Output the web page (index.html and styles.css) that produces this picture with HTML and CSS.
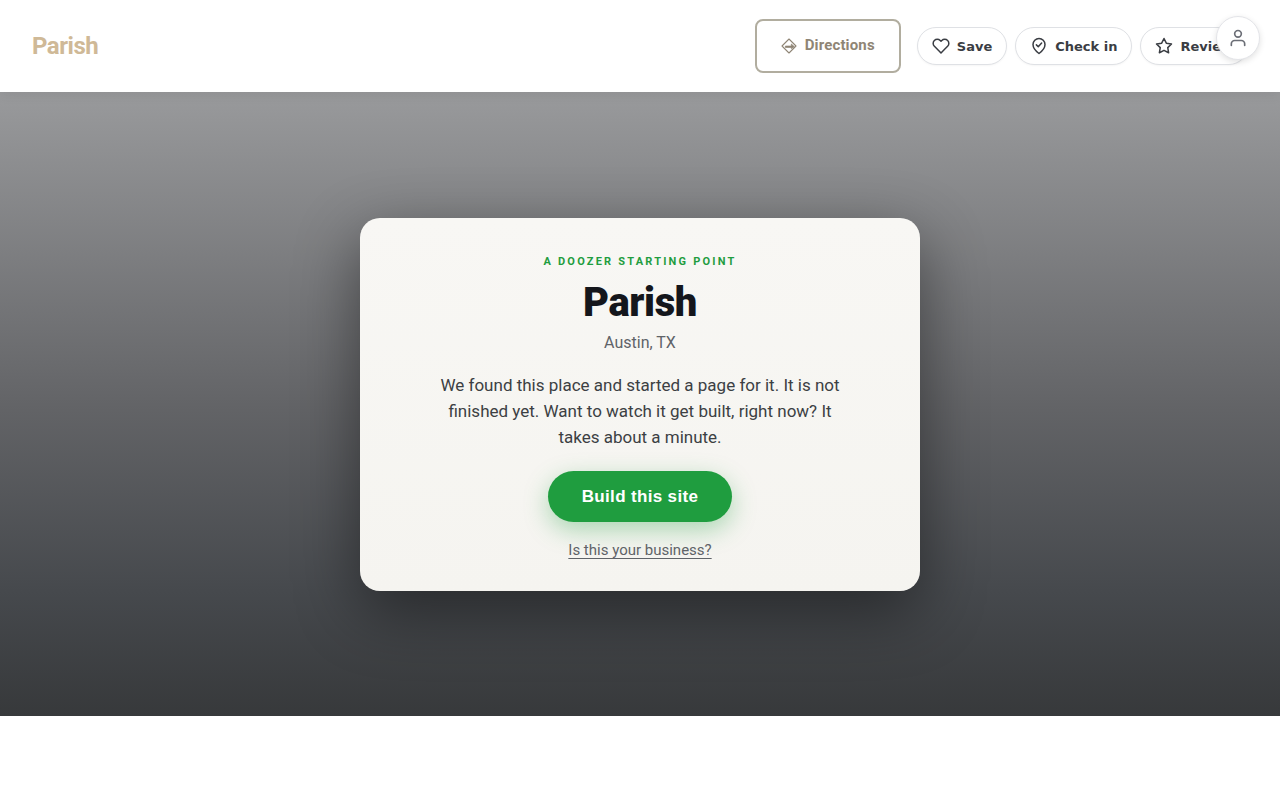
FILE: index.html
```html
<!DOCTYPE html>
<html lang="en">
<head>
    <meta charset="UTF-8">
    <meta name="viewport" content="width=device-width, initial-scale=1.0">
    <title>Parish</title>
    <link rel="stylesheet" href="styles.css">
</head>
<body>
    <header class="site-header">
        <a class="brand" href="#">Parish</a>

        <nav class="header-actions">
            <a class="directions" href="#">
                <svg class="directions-icon" viewBox="0 0 24 24" fill="none" stroke="currentColor" stroke-width="1.6" stroke-linejoin="round">
                    <path d="M12 1.500 22.500 12 12 22.500 1.500 12z"/>
                    <path d="M6.500 12h9v-3l4.500 4-4.500 3v-1.800h-9z" fill="currentColor" stroke-width="1"/>
                </svg>
                <span>Directions</span>
            </a>

            <div class="pills">
                <button class="pill" type="button">
                    <svg viewBox="0 0 24 24">
                        <path d="M20.840 4.610a5.500 5.500 0 0 0-7.780 0L12 5.670l-1.060-1.060a5.500 5.500 0 0 0-7.780 7.780l1.060 1.060L12 21.230l7.780-7.780 1.060-1.060a5.500 5.500 0 0 0 0-7.780z"/>
                    </svg>
                    Save
                </button>
                <button class="pill" type="button">
                    <svg viewBox="0 0 24 24">
                        <path d="M20 10c0 6-8 12-8 12s-8-6-8-12a8 8 0 0 1 16 0z"/>
                        <path d="m8.500 10.500 2.500 2.500 4.500-5"/>
                    </svg>
                    Check in
                </button>
                <button class="pill" type="button">
                    <svg viewBox="0 0 24 24">
                        <path d="m12 2 3.090 6.260L22 9.270l-5 4.870 1.180 6.880L12 17.770l-6.180 3.250L7 14.140 2 9.270l6.910-1.010z"/>
                    </svg>
                    Review
                </button>
            </div>
        </nav>
    </header>

    <button class="account" type="button" aria-label="Account">
        <svg viewBox="0 0 24 24">
            <path d="M20 21v-2a4 4 0 0 0-4-4H8a4 4 0 0 0-4 4v2"/>
            <circle cx="12" cy="7" r="4"/>
        </svg>
    </button>

    <main class="hero">
        <section class="card">
            <p class="eyebrow">A Doozer starting point</p>
            <h1>Parish</h1>
            <p class="location">Austin, TX</p>
            <p class="intro">We found this place and started a page for it. It is not finished yet. Want to watch it get built, right now? It takes about a minute.</p>
            <button class="build" type="button">Build this site</button>
            <a class="claim" href="#">Is this your business?</a>
        </section>
    </main>
</body>
</html>
```

FILE: styles.css
```css
* {
    margin: 0;
    padding: 0;
    box-sizing: border-box;
}

body {
    font-family: Roboto, "Liberation Sans", sans-serif;
    background: #fff;
    color: #3c4043;
    min-height: 100vh;
    overflow-x: hidden;
}

/* Header */
.site-header {
    display: flex;
    align-items: center;
    justify-content: space-between;
    padding: 19px 32px;
    background: #fff;
    box-shadow: 0 2px 12px rgba(0, 0, 0, 0.08);
    position: relative;
    z-index: 1;
}

.brand {
    font-size: 24px;
    font-weight: 700;
    letter-spacing: -0.02em;
    color: #cfb997;
    text-decoration: none;
}

.header-actions {
    display: flex;
    align-items: center;
    gap: 16px;
}

.directions {
    display: flex;
    align-items: center;
    gap: 8px;
    height: 54px;
    padding: 0 24px 2px;
    border: 2px solid #b1ad9f;
    border-radius: 8px;
    color: #8f8575;
    font-size: 15px;
    font-weight: 700;
    letter-spacing: 0.01em;
    text-decoration: none;
}

.directions-icon {
    width: 16px;
    height: 16px;
    margin-top: 2px;
}

.pills {
    display: flex;
    gap: 8px;
}

.pill {
    display: flex;
    align-items: center;
    gap: 7px;
    height: 38px;
    padding: 0 14px;
    border: 1px solid #dfe1e5;
    border-radius: 999px;
    background: #fff;
    color: #3a3d43;
    font-family: "DejaVu Sans", sans-serif;
    font-size: 13px;
    font-weight: 700;
    box-shadow: 0 1px 2px rgba(0, 0, 0, 0.04);
    cursor: pointer;
}

.pill svg,
.account svg {
    width: 18px;
    height: 18px;
    fill: none;
    stroke: currentColor;
    stroke-width: 2;
    stroke-linecap: round;
    stroke-linejoin: round;
}

/* Account button floats over the header */
.account {
    display: flex;
    align-items: center;
    justify-content: center;
    position: fixed;
    top: 16px;
    right: 20px;
    z-index: 2;
    width: 44px;
    height: 44px;
    border: 1px solid #e3e4e8;
    border-radius: 50%;
    background: #fff;
    color: #6b6e76;
    box-shadow: 0 2px 6px rgba(0, 0, 0, 0.12);
    cursor: pointer;
}

.account svg {
    width: 20px;
    height: 20px;
}

/* Hero */
.hero {
    display: flex;
    align-items: center;
    justify-content: center;
    min-height: 78vh;
    padding: 24px;
    background: linear-gradient(180deg, #999a9c 0%, #636467 50%, #46494d 80%, #37393b 100%);
}

.card {
    display: flex;
    flex-direction: column;
    align-items: center;
    width: 100%;
    max-width: 560px;
    padding: 36px 40px 31px;
    border-radius: 20px;
    background: linear-gradient(180deg, #f8f7f4, #f5f4f0);
    box-shadow: 0 20px 64px rgba(0, 0, 0, 0.45);
    text-align: center;
}

.eyebrow {
    color: #1f9d3f;
    font-size: 11px;
    font-weight: 700;
    line-height: 16px;
    letter-spacing: 0.2em;
    text-transform: uppercase;
}

.card h1 {
    margin-top: 11px;
    color: #14161c;
    font-size: 40px;
    font-weight: 900;
    line-height: 44px;
    letter-spacing: -0.01em;
}

.location {
    margin-top: 8px;
    color: #5f6368;
    font-size: 16px;
    line-height: 20px;
}

.intro {
    max-width: 400px;
    margin-top: 19px;
    font-size: 17px;
    line-height: 26px;
}

.build {
    margin-top: 21px;
    padding: 16px 34px;
    border: 0;
    border-radius: 999px;
    background: #1f9d3f;
    color: #fff;
    font-family: "Liberation Sans", Arial, sans-serif;
    font-size: 17px;
    font-weight: 700;
    line-height: 19px;
    letter-spacing: 0.02em;
    box-shadow: 0 8px 24px rgba(31, 157, 63, 0.35);
    cursor: pointer;
}

.claim {
    margin-top: 18px;
    color: #5f6368;
    font-size: 15px;
    line-height: 20px;
    text-underline-offset: 3px;
    text-decoration-skip-ink: none;
}
```
